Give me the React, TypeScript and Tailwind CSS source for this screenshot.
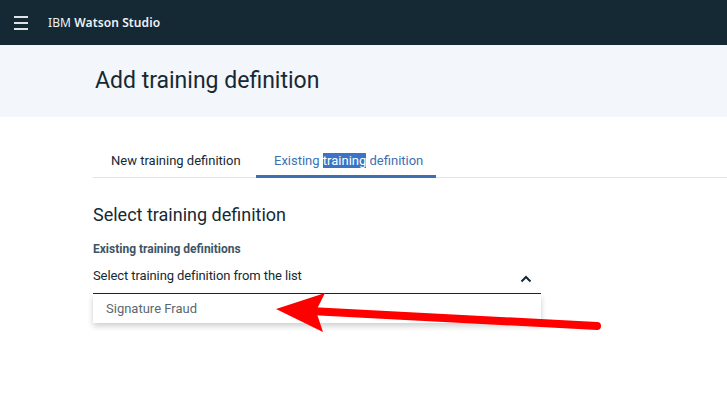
import React from 'react';

const App: React.FC = () => {
  return (
    <div className="min-h-screen w-[727px] h-[412px] overflow-hidden bg-white font-['Roboto',sans-serif] relative">
      {/* Top bar */}
      <div className="h-[45px] bg-[#152935] flex items-center font-['Noto_Sans',sans-serif]">
        <div className="w-[48px] flex justify-center pl-[2px]">
          <div className="flex flex-col gap-[4px] mr-[8px]">
            <span className="block w-[14px] h-[2px] bg-[#dfe3e6]" />
            <span className="block w-[14px] h-[2px] bg-[#dfe3e6]" />
            <span className="block w-[14px] h-[2px] bg-[#dfe3e6]" />
          </div>
        </div>
        <span className="text-[12px] text-[#f0f2f4] tracking-[0.1px]">
          IBM <span className="font-semibold">Watson Studio</span>
        </span>
      </div>

      {/* Page header */}
      <div className="h-[72px] bg-[#f3f6fa] flex items-center pl-[95px]">
        <h1 className="text-[23px] text-[#152935] font-normal mt-[1px]">Add training definition</h1>
      </div>

      {/* Content */}
      <div className="pl-[93px] pt-[34px]">
        <div className="flex border-b border-[#dfe3e6] h-[27px]">
          <div className="w-[163px] pl-[18px] text-[13px] text-[#152935] leading-[20px]">New training definition</div>
          <div className="w-[180px] pl-[18px] text-[13px] text-[#3d70b2] leading-[20px] border-b-[3px] border-[#3d70b2] -mb-[1px]">
            Existing <span className="bg-[#3a74c6] text-white">training</span> definition
          </div>
        </div>

        <h2 className="mt-[25px] text-[18px] text-[#152935] font-normal leading-[24px]">Select training definition</h2>

        <div className="mt-[14px] text-[12px] font-bold text-[#3d5466] leading-[16px]">Existing training definitions</div>

        <div className="w-[448px] mt-[8px]">
          <div className="flex items-center justify-between h-[29px] border-b border-[#152935] pb-[7px]">
            <span className="text-[13px] text-[#152935] tracking-[-0.1px]">Select training definition from the list</span>
            <svg width="12" height="8" viewBox="0 0 12 8" className="mr-[9px] mt-[7px]">
              <path d="M1.5 6.5 L6 2 L10.5 6.5" fill="none" stroke="#152935" strokeWidth="2" />
            </svg>
          </div>
          <div className="h-[29px] bg-white shadow-[0_3px_6px_rgba(0,0,0,0.2)] flex items-center pl-[13px]">
            <span className="text-[13px] text-[#5a6872]">Signature Fraud</span>
          </div>
        </div>
      </div>

      {/* Annotation arrow */}
      <svg className="absolute left-0 top-0 pointer-events-none" width="727" height="412">
        <line x1="597" y1="326" x2="310" y2="311" stroke="#ff0000" strokeWidth="8" strokeLinecap="round" />
        <polygon points="276,309 325,293 316,311 323,332" fill="#ff0000" />
      </svg>
    </div>
  );
};

export default App;
